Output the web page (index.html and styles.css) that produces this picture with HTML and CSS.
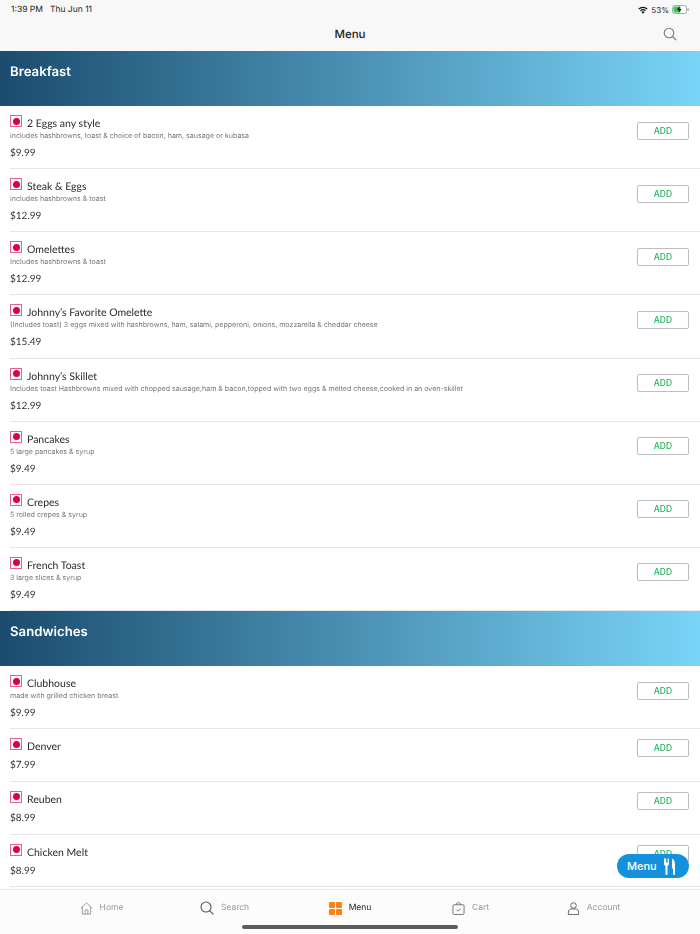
FILE: index.html
```html
<!DOCTYPE html>
<html lang="en">
<head>
<meta charset="utf-8">
<title>Menu</title>
<link rel="stylesheet" href="styles.css">
</head>
<body>
<div class="app">
  <header class="top">
    <div class="status">
      <div class="status-left"><span>1:39 PM</span><span>Thu Jun 11</span></div>
      <div class="status-right">
        <svg class="wifi" viewBox="0 0 10 8" width="10" height="8"><path d="M5 7.800 3.400 6a2.300 2.300 0 0 1 3.200 0Z" fill="#111"/><path d="M2.500 4.800a3.600 3.600 0 0 1 5 0M.8 3a6 6 0 0 1 8.400 0" fill="none" stroke="#111" stroke-width="1.200"/></svg>
        <span class="pct">53%</span>
        <svg class="battery" viewBox="0 0 17 9" width="17" height="9"><rect x=".5" y=".5" width="14" height="8" rx="2" fill="#fff" stroke="#aaa"/><rect x="1.500" y="1.500" width="7" height="6" rx="1" fill="#35c759"/><path d="M15.500 3v3a1.500 1.500 0 0 0 0-3Z" fill="#aaa"/><path d="M7.500 1 5 5h2l-.5 3L9.500 4H7.500Z" fill="#111"/></svg>
      </div>
    </div>
    <div class="nav">
      <span class="nav-spacer"></span>
      <h1>Menu</h1>
      <svg class="nav-search" viewBox="0 0 14 14" width="14" height="14"><circle cx="6" cy="6" r="4.800" fill="none" stroke="#777" stroke-width="1.100"/><path d="m9.500 9.500 3.600 3.600" stroke="#777" stroke-width="1.200" fill="none"/></svg>
    </div>
  </header>

  <main class="list">
    <section>
      <h2 class="banner">Breakfast</h2>
      <article class="item"><div class="info"><div class="name"><i class="veg"></i>2 Eggs any style</div><p class="desc">includes hashbrowns, toast &amp; choice of bacon, ham, sausage or kubasa</p><div class="price">$9.99</div></div><button class="add">ADD</button></article>
      <article class="item"><div class="info"><div class="name"><i class="veg"></i>Steak &amp; Eggs</div><p class="desc">includes hashbrowns &amp; toast</p><div class="price">$12.99</div></div><button class="add">ADD</button></article>
      <article class="item"><div class="info"><div class="name"><i class="veg"></i>Omelettes</div><p class="desc">Includes hashbrowns &amp; toast</p><div class="price">$12.99</div></div><button class="add">ADD</button></article>
      <article class="item"><div class="info"><div class="name"><i class="veg"></i>Johnny’s Favorite Omelette</div><p class="desc">(Includes toast) 3 eggs mixed with hashbrowns, ham, salami, pepperoni, onions, mozzarella &amp; cheddar cheese</p><div class="price">$15.49</div></div><button class="add">ADD</button></article>
      <article class="item"><div class="info"><div class="name"><i class="veg"></i>Johnny’s Skillet</div><p class="desc">Includes toast Hashbrowns mixed with chopped sausage,ham &amp; bacon,topped with two eggs &amp; melted cheese,cooked in an oven-skillet</p><div class="price">$12.99</div></div><button class="add">ADD</button></article>
      <article class="item"><div class="info"><div class="name"><i class="veg"></i>Pancakes</div><p class="desc">5 large pancakes &amp; syrup</p><div class="price">$9.49</div></div><button class="add">ADD</button></article>
      <article class="item"><div class="info"><div class="name"><i class="veg"></i>Crepes</div><p class="desc">5 rolled crepes &amp; syrup</p><div class="price">$9.49</div></div><button class="add">ADD</button></article>
      <article class="item"><div class="info"><div class="name"><i class="veg"></i>French Toast</div><p class="desc">3 large slices &amp; syrup</p><div class="price">$9.49</div></div><button class="add">ADD</button></article>
    </section>
    <section>
      <h2 class="banner">Sandwiches</h2>
      <article class="item"><div class="info"><div class="name"><i class="veg"></i>Clubhouse</div><p class="desc">made with grilled chicken breast</p><div class="price">$9.99</div></div><button class="add">ADD</button></article>
      <article class="item short"><div class="info"><div class="name"><i class="veg"></i>Denver</div><div class="price">$7.99</div></div><button class="add">ADD</button></article>
      <article class="item short"><div class="info"><div class="name"><i class="veg"></i>Reuben</div><div class="price">$8.99</div></div><button class="add">ADD</button></article>
      <article class="item short"><div class="info"><div class="name"><i class="veg"></i>Chicken Melt</div><div class="price">$8.99</div></div><button class="add">ADD</button></article>
    </section>
  </main>

  <button class="fab">Menu
    <svg viewBox="0 0 11 17" width="11" height="17"><path d="M0 .5v5c0 1.300.6 2.100 1.500 2.400V16a1 1 0 0 0 2 0V7.900C4.400 7.600 5 6.800 5 5.500v-5h-.9v4.300h-.8V.5h-.6v4.300h-.8V.5Z" fill="#fff"/><path d="M8 .5c1.800.6 3 3 3 6V16a1 1 0 0 1-2 0v-5.500H8Z" fill="#fff"/></svg>
  </button>

  <nav class="tabs">
    <a class="tab"><svg viewBox="0 0 14 14" width="13" height="13"><path d="M1 6.500 7 1l6 5.500M2.500 5.500V13h9V5.500M5.500 13V8.500h3V13" fill="none" stroke="#8a8a93" stroke-width=".9"/></svg>Home</a>
    <a class="tab"><svg viewBox="0 0 14 14" width="14" height="14"><circle cx="6" cy="6" r="5" fill="none" stroke="#555" stroke-width="1.100"/><path d="m9.600 9.600 3.800 3.800" stroke="#555" stroke-width="1.200"/></svg>Search</a>
    <a class="tab active"><span class="grid-icon"><b></b><b></b><b></b><b></b></span>Menu</a>
    <a class="tab"><svg viewBox="0 0 14 14" width="13" height="13"><path d="M2 3h10a1 1 0 0 1 1 1v8a1.500 1.500 0 0 1-1.500 1.500h-9A1.500 1.500 0 0 1 1 12V4a1 1 0 0 1 1-1ZM4.500 3c0-3 5-3 5 0M4.800 8.300l1.500 1.500 3-2.500" fill="none" stroke="#5c5c66" stroke-width=".9"/></svg>Cart</a>
    <a class="tab"><svg viewBox="0 0 14 14" width="13" height="13"><circle cx="7" cy="3.800" r="3" fill="none" stroke="#5c5c66"/><path d="M1.500 13.500v-2.500c0-2 1.500-3.500 3-3.500h5c1.500 0 3 1.500 3 3.500v2.500Z" fill="none" stroke="#5c5c66"/></svg>Account</a>
  </nav>
  <div class="home-bar"></div>
</div>
</body>
</html>
```

FILE: styles.css
```css
* { box-sizing: border-box; }
html, body { margin: 0; padding: 0; }
body { font-family: Inter, "Liberation Sans", sans-serif; background: #fff; color: #222; text-rendering: geometricPrecision; }
.app { position: relative; width: 700px; height: 934px; overflow: hidden; display: flex; flex-direction: column; will-change: opacity; }
.top { height: 51px; flex: none; background: #f8f8f8; }
.status { height: 17px; padding: 2px 11px 0 11px; display: flex; justify-content: space-between; align-items: center; font-size: 8.500px; color: #222; }
.status-left { display: flex; gap: 7px; }
.status-right { display: flex; gap: 3px; align-items: center; }
.pct { font-size: 8px; }
.nav { height: 34px; padding: 0 23px; display: flex; justify-content: space-between; align-items: center; }
.nav-spacer { width: 14px; }
.nav h1 { margin: 0; font-size: 11.500px; font-weight: 500; color: #222; }
.list { flex: 1; overflow: hidden; min-height: 0; }
.banner { margin: 0; height: 55px; padding: 14px 10px 0; font-size: 13.200px; line-height: 15px; font-weight: 600; color: #fff; background: linear-gradient(90deg, #1b4c6f 0%, #79d4f7 100%); }
.item { height: 63.140px; margin-left: 10px; padding: 10px 11px 0 0; border-bottom: 1px solid #e6e6e6; display: flex; justify-content: space-between; align-items: flex-start; }
.item.short { height: 52.750px; }
.info { min-width: 0; }
.name { display: flex; align-items: center; height: 16px; font-family: Lato, Inter, sans-serif; font-size: 10.500px; color: #2b2b2b; }
.veg { width: 12px; height: 12px; margin-right: 5px; border: 1.500px solid #e8608f; position: relative; top: -3px; display: flex; align-items: center; justify-content: center; }
.veg::after { content: ""; width: 7px; height: 7px; border-radius: 50%; background: #d9004f; }
.desc { margin: -1px 0 0; font-size: 7.070px; line-height: 9px; color: #777; }
.price { margin-top: 7px; font-family: Lato, Inter, sans-serif; font-size: 10px; line-height: 13px; color: #333; }
.short .price { margin-top: 4px; }
.add { width: 52px; height: 18px; margin-top: 5.500px; padding: 0; background: #fff; border: 1px solid #bdbdbd; border-radius: 2px; color: #22b35e; font: 500 8.500px Inter, sans-serif; }
.short .add { margin-top: 0; }
.fab { position: absolute; left: 617px; top: 854px; width: 72px; height: 24px; padding: 0 14px 0 10px; border: 0; border-radius: 12px; background: #1391dc; color: #fff; font: 500 11px Inter, sans-serif; display: flex; justify-content: space-between; align-items: center; }
.tabs { flex: none; height: 45px; border-top: 1px solid #e8e8e8; background: #fcfcfc; display: grid; grid-template-columns: repeat(5, 123px); justify-content: center; padding-bottom: 8px; }
.tab { display: flex; align-items: center; justify-content: center; gap: 7px; padding-right: 5px; font-size: 8.500px; color: #9a9a9a; }
.tab.active { padding-right: 0; color: #222; }
.grid-icon { display: grid; grid-template-columns: 6px 6px; gap: 1px; }
.grid-icon b { height: 6px; border-radius: 1px; background: #ff7f11; }
.home-bar { position: absolute; left: 242px; top: 924.500px; width: 216px; height: 4px; border-radius: 2px; background: #5c5c5c; }
```
